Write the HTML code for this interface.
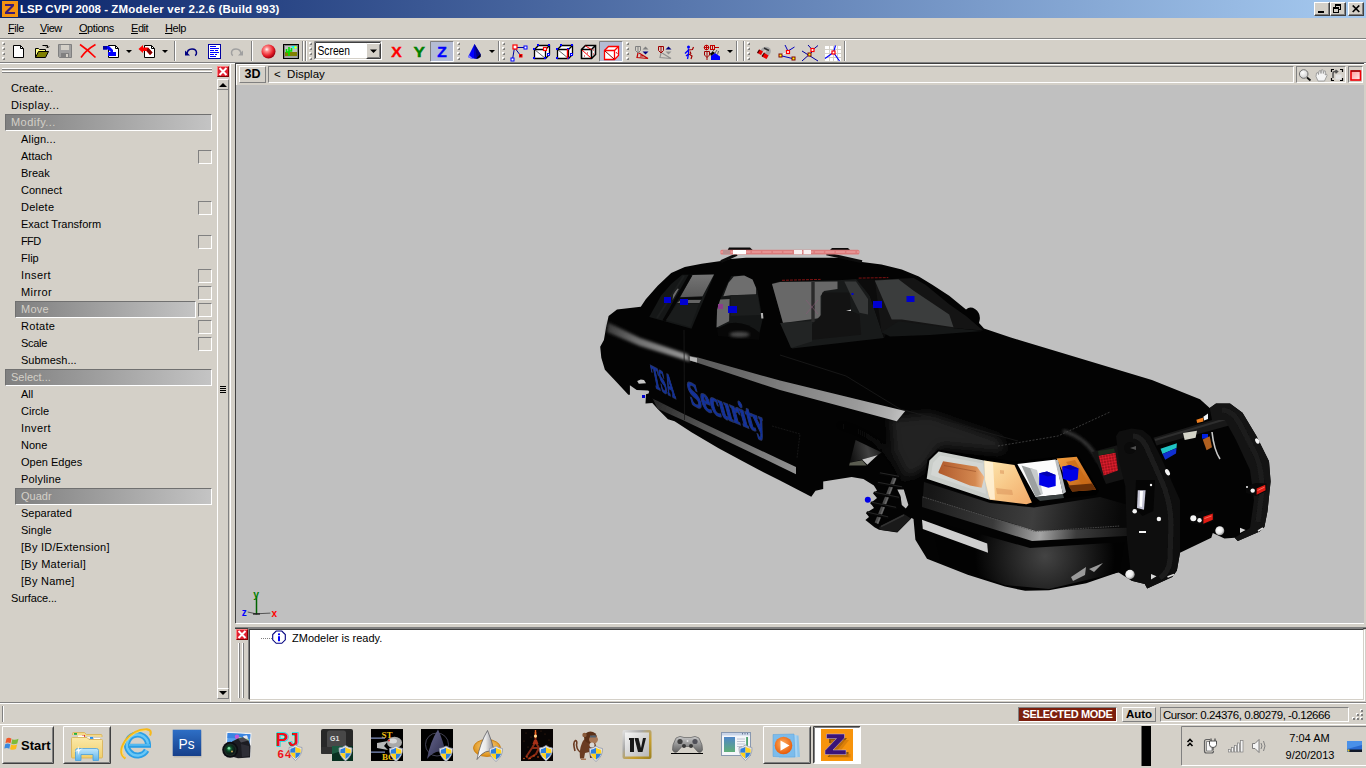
<!DOCTYPE html>
<html>
<head>
<meta charset="utf-8">
<title>LSP CVPI 2008 - ZModeler</title>
<style>
*{box-sizing:border-box;margin:0;padding:0}
html,body{width:1366px;height:768px;overflow:hidden;background:#d4d0c8;font-family:"Liberation Sans",sans-serif;font-size:11px;color:#000}
.abs{position:absolute}
#title{left:0;top:0;width:1366px;height:18px;background:linear-gradient(90deg,#0a246a 0%,#a6caf0 100%)}
#title .t{left:20px;top:2px;color:#fff;font-weight:bold;font-size:11.5px;line-height:15px;white-space:pre}
.wbtn{top:2px;width:16px;height:14px;background:#d4d0c8;border:1px solid;border-color:#fff #404040 #404040 #fff;box-shadow:inset -1px -1px 0 #808080}
#menu{left:0;top:18px;width:1366px;height:20px}
#menu span{position:absolute;top:3px;line-height:14px;letter-spacing:-0.45px}
#menu u{text-decoration:underline}
.hline{left:0;width:1366px;height:2px;border-top:1px solid #808080;border-bottom:1px solid #fff}
.tbsep{width:2px;border-left:1px solid #808080;border-right:1px solid #fff}
.grip{width:3px;background:repeating-linear-gradient(180deg,#fff 0,#fff 1px,#808080 1px,#808080 2px,#d4d0c8 2px,#d4d0c8 4px)}
#left .it{position:absolute;line-height:14px;white-space:nowrap}
.bar{position:absolute;height:17px;background:linear-gradient(90deg,#808080,#c4c4c4);border:1px solid;border-color:#707070 #fff #fff #707070;color:#d4d0c8;line-height:14px}
.cb{position:absolute;left:198px;width:14px;height:14px;border:1px solid;border-color:#808080 #fff #fff #808080;background:#d4d0c8}
.redx{width:12px;height:11px;background:#e02030;border:1px solid;border-color:#ff8080 #800000 #800000 #ff8080}
#vp{left:236px;top:85px;width:1128px;height:538px;background:#c0c0c0}
#task .ic{position:absolute;top:729px;width:32px;height:32px}
</style>
</head>
<body>
<!-- TITLE BAR -->
<div id="title" class="abs">
  <svg class="abs" style="left:2px;top:1px" width="16" height="16" viewBox="0 0 16 16"><rect width="16" height="16" fill="#f39410"/><path d="M3 3H12V5L6 11H13V13H3V11L9 5H3Z" fill="#3a1d78"/></svg>
  <div class="abs t">LSP CVPI 2008 - <span id="t2" style="letter-spacing:0.2px">ZModeler ver 2.2.6 (Build 993)</span></div>
  <div class="abs wbtn" style="left:1314px"><div class="abs" style="left:3px;top:8px;width:6px;height:2px;background:#000"></div></div>
  <div class="abs wbtn" style="left:1330px"><svg class="abs" style="left:0;top:-1px" width="14" height="12" shape-rendering="crispEdges"><path d="M4 2H10V4H4ZM4 4H5V5H4ZM9 4H10V8H8V7H9Z" fill="#000"/><path d="M2 5H8V7H2ZM2 7H3V11H2ZM7 7H8V11H7ZM2 10H8V11H2Z" fill="#000"/></svg></div>
  <div class="abs wbtn" style="left:1348px"><svg class="abs" style="left:3px;top:2px" width="9" height="8"><path d="M0.7 0.5L7.3 7M7.3 0.5L0.7 7" stroke="#000" stroke-width="1.7"/></svg></div>
</div>
<!-- MENU -->
<div id="menu" class="abs">
  <span style="left:8px"><u>F</u>ile</span>
  <span style="left:40px"><u>V</u>iew</span>
  <span style="left:79px"><u>O</u>ptions</span>
  <span style="left:131px"><u>E</u>dit</span>
  <span style="left:165px"><u>H</u>elp</span>
</div>
<div class="abs hline" style="top:38px"></div>
<!-- TOOLBAR -->
<div id="tb" class="abs" style="left:0;top:40px;width:1366px;height:22px">
<!--TB-START--><svg class="abs" style="left:0;top:0" width="1366" height="22" viewBox="0 40 1366 22">
<defs>
<g id="grip"><rect x="0" y="42" width="2" height="2" fill="#fff"/><rect x="1" y="43" width="2" height="2" fill="#808080"/><rect x="1" y="43" width="1" height="1" fill="#d4d0c8"/>
<rect x="0" y="47" width="2" height="2" fill="#fff"/><rect x="1" y="48" width="2" height="2" fill="#808080"/><rect x="1" y="48" width="1" height="1" fill="#d4d0c8"/>
<rect x="0" y="52" width="2" height="2" fill="#fff"/><rect x="1" y="53" width="2" height="2" fill="#808080"/><rect x="1" y="53" width="1" height="1" fill="#d4d0c8"/>
<rect x="0" y="57" width="2" height="2" fill="#fff"/><rect x="1" y="58" width="2" height="2" fill="#808080"/><rect x="1" y="58" width="1" height="1" fill="#d4d0c8"/></g>
<g id="sep"><rect x="0" y="41" width="1" height="20" fill="#808080"/><rect x="1" y="41" width="1" height="20" fill="#fff"/></g>
<path id="dd" d="M0 0H6L3 3Z" fill="#000"/>
<radialGradient id="ball" cx="0.38" cy="0.35" r="0.65"><stop offset="0" stop-color="#fff"/><stop offset="0.25" stop-color="#ff8a8a"/><stop offset="0.7" stop-color="#e8202a"/><stop offset="1" stop-color="#a00010"/></radialGradient>
</defs>
<use href="#grip" x="2"/>
<!-- new -->
<path d="M13.5 45.5H20.5L23.5 48.5V57.5H13.5Z" fill="#fff" stroke="#000"/><path d="M20.5 45.5V48.5H23.5" fill="none" stroke="#000"/>
<!-- open -->
<path d="M35.5 57.5V48.5H38.5L39.5 49.5H45.5V51.5" fill="#ffff80" stroke="#000"/><path d="M35.5 57.5L38.5 51.5H48.5L45.5 57.5Z" fill="#808000" stroke="#000"/><path d="M42.5 45.5H47.5V47.5M46 46.5L47.5 48L49 46.5" fill="none" stroke="#000"/>
<!-- save grey -->
<path d="M58.5 44.5H71.5V57.5H59.5L58.5 56.5Z" fill="#a0a0a0" stroke="#808080"/><rect x="61" y="45" width="8" height="5" fill="#d4d0c8"/><rect x="61" y="53" width="8" height="4" fill="#808080"/><rect x="66" y="54" width="2" height="3" fill="#d4d0c8"/>
<!-- red X -->
<path d="M80 44.5Q88 50 95.5 57.5M95.5 44.5Q86 50 81 57.5" fill="none" stroke="#f00" stroke-width="1.6"/>
<!-- import -->
<path d="M108.5 45.5H115.5L118.5 48.5V57.5H108.5Z" fill="#fff" stroke="#000"/><path d="M115.5 45.5V48.5H118.5" fill="none" stroke="#000"/>
<path d="M103 46H109L113 50V52H116V56H108V52H111L108 49.5H103Z" fill="#00f"/><path d="M103 46H107V49.5H103Z" fill="#0000a0"/>
<use href="#dd" x="126" y="50"/>
<!-- export -->
<path d="M144.5 45.5H151.5L154.5 48.5V57.5H144.5Z" fill="#fff" stroke="#000"/><path d="M151.5 45.5V48.5H154.5" fill="none" stroke="#000"/>
<path d="M138.5 49L143 45V47.5H148L152.5 52.5L150 55L146.5 51H143V53Z" fill="#f00"/><path d="M148 47.5L152.5 52.5L150 55L146.5 51Z" fill="#800000"/>
<use href="#dd" x="162" y="50"/>
<use href="#sep" x="174"/>
<!-- undo -->
<path d="M187 54.5Q187 49 192 49Q196.5 49 196.5 53Q196.5 55 195 55.5" fill="none" stroke="#000080" stroke-width="1.5"/><path d="M185 50.5V55.5H190Z" fill="#000080"/>
<!-- list doc -->
<rect x="208.5" y="44.5" width="12" height="14" fill="#fff" stroke="#0000a0"/><path d="M210 46.5H216M210 48.5H219M210 50.5H214M210 52.5H219M210 54.5H214M215 50.5H218M215 54.5H217M210 56.5H216" stroke="#00f" stroke-width="1" shape-rendering="crispEdges"/>
<!-- redo grey -->
<path d="M241 54.5Q241 49 236 49Q231.5 49 231.5 53Q231.5 55 233 55.5" fill="none" stroke="#a0a0a0" stroke-width="1.5"/><path d="M243 50.5V55.5H238Z" fill="#a0a0a0"/>
<use href="#sep" x="251"/>
<!-- red ball -->
<circle cx="268.5" cy="51.5" r="7" fill="url(#ball)"/>
<!-- cactus picture -->
<rect x="283.5" y="44.5" width="15" height="14" fill="#808080" stroke="#000"/><rect x="285" y="46" width="12" height="6" fill="#c0c0c0"/><rect x="285" y="52" width="12" height="4" fill="#808000"/><rect x="285" y="56" width="12" height="2" fill="#a0a0a0"/>
<path d="M291 46L294 49H297V46Z" fill="#00ffff"/><circle cx="295.5" cy="47.5" r="1.300" fill="#ffff00"/>
<path d="M289 47V56M286.5 49V52H289M291.5 48V51H289" fill="none" stroke="#00e000" stroke-width="1.600"/>
<use href="#sep" x="302"/><use href="#sep" x="305"/>
<use href="#grip" x="309"/>
<!-- combo -->
<rect x="314" y="41" width="68" height="19" fill="#fff"/><path d="M314.5 59.5V41.5H381.5" fill="none" stroke="#808080"/><path d="M315.5 58.5V42.5H380.5" fill="none" stroke="#404040"/><path d="M314.5 59.5H381.5V41.5" fill="none" stroke="#fff"/><path d="M315.5 58.5H380.5V42.5" fill="none" stroke="#d4d0c8"/>
<rect x="366" y="43" width="15" height="16" fill="#d4d0c8"/><path d="M366.5 58.5V43.5H380.5" fill="none" stroke="#fff"/><path d="M366.5 58.5H380.5V43.5" fill="none" stroke="#404040"/><path d="M367.5 57.5H379.5V44.5" fill="none" stroke="#808080"/>
<path d="M370 49.5H377L373.5 53Z" fill="#000"/>
<text x="317.5" y="55" font-family="Liberation Sans, sans-serif" font-size="12" fill="#000" textLength="32.5" lengthAdjust="spacingAndGlyphs">Screen</text>
<!-- X Y Z -->
<text x="391.3" y="56.7" font-family="Liberation Sans, sans-serif" font-size="15" font-weight="bold" fill="#f00" stroke="#f00" stroke-width="0.4" textLength="10.5" lengthAdjust="spacingAndGlyphs">X</text>
<text x="413.5" y="56.7" font-family="Liberation Sans, sans-serif" font-size="15" font-weight="bold" fill="#008000" stroke="#008000" stroke-width="0.4" textLength="11.5" lengthAdjust="spacingAndGlyphs">Y</text>
<rect x="430" y="41" width="24" height="21" fill="#b4bcd4"/><path d="M430.5 61.5V41.5H453.5" fill="none" stroke="#808080"/><path d="M430.5 61.5H453.5V41.5" fill="none" stroke="#fff"/>
<text x="437.3" y="56.7" font-family="Liberation Sans, sans-serif" font-size="15" font-weight="bold" fill="#00f" stroke="#00f" stroke-width="0.4" textLength="9.5" lengthAdjust="spacingAndGlyphs">Z</text>
<use href="#grip" x="457"/>
<!-- cone -->
<path d="M474.5 44L468 57L471 58.5H478L480.5 56.5V54Z" fill="#00f"/><path d="M474.5 44V58.5H478L480.5 56.5V54Z" fill="#000080"/><path d="M474.5 44L474.5 58.5L477 58.5Z" fill="#0000c0"/><path d="M480.5 54V57L478 58.5H476Z" fill="#000"/><path d="M468 57L471 58.5H473L469 55Z" fill="#8080ff"/>
<use href="#dd" x="489" y="50"/>
<use href="#sep" x="498"/>
<use href="#grip" x="502"/>
<!-- vertex icon -->
<path d="M514.5 47.5H525.5M514.5 47.5L512.5 59.5M514.5 47.5L520.5 55.5" fill="none" stroke="#0000a0" stroke-width="1"/>
<rect x="513" y="45" width="4" height="4" fill="#fff" stroke="#f00" stroke-width="1.200"/><rect x="524" y="46" width="3" height="3" fill="#fff" stroke="#00f"/><rect x="511" y="58" width="3" height="3" fill="#fff" stroke="#00f"/><rect x="519" y="54" width="3.5" height="3.5" fill="#f00"/><rect x="520" y="55" width="1.5" height="1.5" fill="#600"/>
<!-- edge cube -->
<g id="cube"><path d="M534.5 49.5L538.5 45.5H549.5V54.5L545.5 58.5H534.5Z" fill="#fff" stroke="#000" stroke-width="1.300"/><path d="M534.5 49.5H545.5V58.5M545.5 49.5L549.5 45.5" fill="none" stroke="#000" stroke-width="1.300"/><path d="M534.5 49.5L545.5 58.5" stroke="#404040" stroke-width="0.800"/></g>
<g fill="#00f"><rect x="537" y="44" width="2" height="2"/><rect x="548" y="44" width="2" height="2"/><rect x="533" y="48" width="2" height="2"/><rect x="533" y="57" width="2" height="2"/><rect x="544" y="57" width="2" height="2"/></g>
<rect x="543.5" y="47.5" width="3" height="3" fill="#fff" stroke="#f00" stroke-width="1.200"/><rect x="547.5" y="53.5" width="2" height="2" fill="#fff" stroke="#00f"/>
<!-- face cube -->
<use href="#cube" x="23"/>
<g fill="#00f"><rect x="560" y="44" width="2" height="2"/><rect x="571" y="44" width="2" height="2"/><rect x="556" y="48" width="2" height="2"/><rect x="556" y="57" width="2" height="2"/><rect x="567" y="48" width="2" height="2"/><rect x="567" y="57" width="2" height="2"/></g>
<path d="M567.5 49V58.5" stroke="#f00" stroke-width="1.400"/><rect x="570.5" y="53.5" width="2" height="2" fill="#fff" stroke="#00f"/>
<!-- object cube -->
<path d="M581.5 49.5L585.5 45.5H595.5V54.5L591.5 58.5H581.5Z" fill="#fff" stroke="#000" stroke-width="1.600"/><path d="M581.5 49.5H591.5V58.5M591.5 49.5L595.5 45.5" fill="none" stroke="#000" stroke-width="1.600"/>
<path d="M582 50L591 58M585.5 46L591.5 49.5" stroke="#f00" stroke-width="1"/><path d="M587 53H588M584 56H585M593 50H594M593 54H594" stroke="#c00" stroke-width="1"/>
<!-- selected red cube -->
<rect x="599" y="41" width="24" height="21" fill="#b4bcd4"/><path d="M599.5 61.5V41.5H622.5" fill="none" stroke="#808080"/><path d="M599.5 61.5H622.5V41.5" fill="none" stroke="#fff"/>
<path d="M604.5 50.5L608.5 46.5H618.5V55.5L614.5 59.5H604.5Z" fill="#fff" stroke="#f00" stroke-width="1.300"/><path d="M604.5 50.5H614.5V59.5M614.5 50.5L618.5 46.5" fill="none" stroke="#f00" stroke-width="1.300"/><path d="M605 51L614 59" stroke="#800" stroke-width="1"/><path d="M616 52L617.5 54" stroke="#a00" stroke-width="0.800"/>
<use href="#grip" x="626"/>
<!-- sel mode icons -->
<path d="M635.5 46.5H640.5V50.5L638 53L635.5 50.5Z" fill="#d4d0c8" stroke="#808080"/><path d="M638 47V52" stroke="#808080"/>
<path d="M638 53L637 57.5L648 58.5L639 53M640 56H644" fill="none" stroke="#c00000" stroke-width="1.200"/>
<path d="M642.5 49.5L645.5 46.5L648.5 49.5Z" fill="#808080"/><path d="M642.5 51.5L645.5 54.5L648.5 51.5Z" fill="#000080"/>
<path d="M658.5 46.5H663.5V50.5L661 53L658.5 50.5Z" fill="#d4d0c8" stroke="#a00000"/><path d="M661 47V52" stroke="#a00000"/>
<path d="M661 53L660 57.5L671 58.5L662 53" fill="none" stroke="#909090" stroke-width="1.200"/>
<path d="M665.5 49.5L668.5 46.5L671.5 49.5Z" fill="#000080"/><path d="M665.5 51.5L668.5 54.5L671.5 51.5Z" fill="#909090"/>
<!-- person -->
<circle cx="688.5" cy="47" r="1.5" fill="#00f"/><path d="M688.5 48.5V54L687.5 59M688.5 50L685 53.5M688.5 54L686 56" fill="none" stroke="#00f" stroke-width="1.300"/>
<path d="M689 50L692.5 49.5L693.5 47M689 54L692 56L691 59M690 51.5L691 54" fill="none" stroke="#a00000" stroke-width="1.200"/>
<!-- icon 4 -->
<circle cx="706.5" cy="47.5" r="2.300" fill="none" stroke="#c00000"/><path d="M704 47.5H709M706.5 45V50" stroke="#c00000"/>
<rect x="710.5" y="45.5" width="4" height="4" fill="none" stroke="#c00000"/><path d="M714 47.5H719M712.5 45V50" stroke="#c00000"/>
<path d="M704.5 51.5H709.5V55L707 57.5L704.5 55Z M707 52V60" fill="none" stroke="#a00000"/>
<path d="M711 56L715 53L720 56.5V60H711Z" fill="#00f"/><path d="M711 56L715 53L713 51.5L710 53.5Z" fill="#000"/><path d="M712 52L714 50M715 53L717 50M717.5 54.5L718.5 51" stroke="#404040" stroke-width="0.800"/>
<use href="#dd" x="727" y="50"/>
<use href="#sep" x="736"/><use href="#sep" x="743"/>
<use href="#grip" x="747"/>
<!-- magnet -->
<path d="M760 52Q762 45.5 768 47Q772 48.5 770.5 53L766.5 59L762 56.5L766 51.5Q766.5 50 765 50Q763.5 50 763 51.5L761 55L757.5 53Z" fill="#a8a8a8"/>
<path d="M757.5 53L759.5 49.5L763 51.5L761 55Z" fill="#e00"/><path d="M762 56.5L764.5 53L768.5 55.5L766.5 59Z" fill="#e00"/><path d="M757 52.5L759 49.5L760 50L758 53.5Z M761.5 56L764 52.5L765 53L762.5 57Z" fill="#400"/>
<path d="M764 48L769 50.5" stroke="#303030" stroke-width="1.5"/>
<!-- snap1 -->
<path d="M785 45L788 51L794.5 47M780 55.5L792.5 58.5" fill="none" stroke="#0000c0" stroke-width="1"/><path d="M780 55.5L788 52" stroke="#fff" stroke-width="1"/>
<rect x="786.5" y="50.5" width="3" height="3" fill="#fff" stroke="#f00" stroke-width="1.200"/><rect x="779" y="54" width="3" height="3" fill="#ff0" stroke="#800000"/><rect x="792" y="57" width="3" height="3" fill="#ff0" stroke="#800000"/>
<!-- snap2 -->
<path d="M802 51L818 61M802 61L812 52M808 45L812.5 50L818 45.5" fill="none" stroke="#0000a0" stroke-width="1"/>
<rect x="811" y="48.5" width="3" height="3" fill="#fff" stroke="#f00" stroke-width="1.200"/><rect x="808" y="53" width="3" height="3" fill="#ff0" stroke="#800000"/>
<!-- snap3 grid -->
<rect x="825" y="46" width="16" height="15" fill="#fff"/><path d="M829.5 46V61M833.5 46V61M837.5 46V61M825 49.5H841M825 53.5H841M825 57.5H841" stroke="#d4d0c8" stroke-width="1"/>
<path d="M835.5 45.5L833.5 52.5L825 58.5M833.5 52.5L839.5 61" fill="none" stroke="#00f" stroke-width="1.200"/><rect x="832" y="51" width="3" height="3" fill="#fff" stroke="#f00" stroke-width="1.200"/>
<use href="#sep" x="844"/>
</svg>
<!--TB-END-->
</div>
<div class="abs hline" style="top:62px"></div>

<!-- LEFT PANEL -->
<div id="left" class="abs" style="left:0;top:64px;width:230px;height:640px">
<div class="abs" style="left:2px;top:4px;width:210px;height:2px;border-top:1px solid #fff;border-bottom:1px solid #808080"></div>
<div class="abs" style="left:2px;top:7px;width:210px;height:2px;border-top:1px solid #fff;border-bottom:1px solid #808080"></div>
<div class="abs redx" style="left:217px;top:2px"><svg class="abs" style="left:0;top:0" width="10" height="9"><path d="M1.5 1L8.5 8M8.5 1L1.5 8" stroke="#fff" stroke-width="2"/></svg></div>
<div class="abs" style="left:217px;top:15px;width:12px;height:620px;border-left:1px solid #fff;border-right:1px solid #808080"></div><div class="abs" style="left:230px;top:0;width:1px;height:638px;background:#fff"></div>
<div class="abs" style="left:217px;top:15px;width:12px;height:11px;border:1px solid;border-color:#fff #808080 #808080 #fff"><svg class="abs" style="left:1px;top:2px" width="8" height="5"><path d="M0 5L4 1L8 5Z" fill="#000"/></svg></div>
<div class="abs" style="left:217px;top:624px;width:12px;height:11px;border:1px solid;border-color:#fff #808080 #808080 #fff"><svg class="abs" style="left:1px;top:2px" width="8" height="5"><path d="M0 0L4 4L8 0Z" fill="#000"/></svg></div>
<div class="abs" style="left:220px;top:322px;width:6px;height:7px;background:repeating-linear-gradient(180deg,#000 0,#000 1px,transparent 1px,transparent 2px)"></div>
<div class="it" style="left:11px;top:17px">Create...</div>
<div class="it" style="left:11px;top:34px;letter-spacing:0.4px">Display...</div>
<div class="bar" style="left:5px;top:50px;width:207px;padding-left:5px;letter-spacing:0.45px">Modify...</div>
<div class="it" style="left:21px;top:68px;letter-spacing:0.18px">Align...</div>
<div class="it" style="left:21px;top:85px">Attach</div>
<div class="cb" style="top:86px"></div>
<div class="it" style="left:21px;top:102px">Break</div>
<div class="it" style="left:21px;top:119px">Connect</div>
<div class="it" style="left:21px;top:136px;letter-spacing:0.25px">Delete</div>
<div class="cb" style="top:137px"></div>
<div class="it" style="left:21px;top:153px">Exact Transform</div>
<div class="it" style="left:21px;top:170px;letter-spacing:-0.65px">FFD</div>
<div class="cb" style="top:171px"></div>
<div class="it" style="left:21px;top:187px">Flip</div>
<div class="it" style="left:21px;top:204px;letter-spacing:0.42px">Insert</div>
<div class="cb" style="top:205px"></div>
<div class="it" style="left:21px;top:221px;letter-spacing:0.4px">Mirror</div>
<div class="cb" style="top:222px"></div>
<div class="bar" style="left:15px;top:237px;width:181px;padding-left:5px;letter-spacing:0.27px">Move</div>
<div class="cb" style="top:239px"></div>
<div class="it" style="left:21px;top:255px;letter-spacing:0.3px">Rotate</div>
<div class="cb" style="top:256px"></div>
<div class="it" style="left:21px;top:272px;letter-spacing:-0.3px">Scale</div>
<div class="cb" style="top:273px"></div>
<div class="it" style="left:21px;top:289px">Submesh...</div>
<div class="bar" style="left:5px;top:305px;width:207px;padding-left:5px">Select...</div>
<div class="it" style="left:21px;top:323px">All</div>
<div class="it" style="left:21px;top:340px">Circle</div>
<div class="it" style="left:21px;top:357px;letter-spacing:0.42px">Invert</div>
<div class="it" style="left:21px;top:374px">None</div>
<div class="it" style="left:21px;top:391px">Open Edges</div>
<div class="it" style="left:21px;top:408px;letter-spacing:0.2px">Polyline</div>
<div class="bar" style="left:15px;top:424px;width:197px;padding-left:5px">Quadr</div>
<div class="it" style="left:21px;top:442px">Separated</div>
<div class="it" style="left:21px;top:459px">Single</div>
<div class="it" style="left:21px;top:476px;letter-spacing:0.26px">[By ID/Extension]</div>
<div class="it" style="left:21px;top:493px;letter-spacing:0.3px">[By Material]</div>
<div class="it" style="left:21px;top:510px;letter-spacing:0.25px">[By Name]</div>
<div class="it" style="left:11px;top:527px;letter-spacing:-0.13px">Surface...</div>
</div>

<!-- VIEWPORT HEADER -->
<div id="vph" class="abs" style="left:235px;top:64px;width:1131px;height:21px">
<div class="abs" style="left:0;top:-1px;width:1129px;height:1px;background:#404040"></div>
<div class="abs" style="left:0;top:-1px;width:1px;height:560px;background:#404040"></div>
<div class="abs" style="left:1px;top:0;width:1128px;height:1px;background:#fff"></div>
<div class="abs" style="left:1px;top:0;width:1px;height:21px;background:#fff"></div>
<div class="abs" style="left:4px;top:2px;width:27px;height:17px;border:1px solid;border-color:#fff #808080 #808080 #fff;font-weight:bold;font-size:12.5px;line-height:15px;text-align:center">3D</div>
<div class="abs" style="left:33px;top:2px;width:1026px;height:17px;border:1px solid;border-color:#808080 #fff #fff #808080"></div>
<div class="abs" style="left:39px;top:3px;line-height:14px;font-size:11.5px;white-space:pre">&lt;  Display</div>
<div class="abs" style="left:1061px;top:2px;width:50px;height:17px;border:1px solid;border-color:#808080 #fff #fff #808080"></div>
<div class="abs" style="left:1113px;top:2px;width:15px;height:17px;border:1px solid;border-color:#808080 #fff #fff #808080"></div>
<svg class="abs" style="left:1061px;top:0" width="70" height="21" viewBox="1296 64 70 21">
<defs><radialGradient id="lens" cx="0.4" cy="0.35" r="0.7"><stop offset="0" stop-color="#fff"/><stop offset="1" stop-color="#c8c8c8"/></radialGradient>
<linearGradient id="rsq" x1="0" y1="0" x2="1" y2="1"><stop offset="0" stop-color="#ff9a9a"/><stop offset="1" stop-color="#fff0f0"/></linearGradient></defs>
<circle cx="1303.7" cy="74" r="4.3" fill="url(#lens)" stroke="#707070" stroke-width="1"/><path d="M1307 77.5L1310.5 80.5" stroke="#101010" stroke-width="1.8"/>
<path d="M1318 81L1316 76.5L1316.5 73L1318 72.5L1318.5 74.5L1319 71L1320.5 70.5L1321 73.5L1321.5 69.8L1323 69.8L1323.3 73.5L1324.2 70.8L1325.5 71.2L1325.2 75L1326.5 74L1327 75.5L1324.5 81Z" fill="#f4f4f4" stroke="#909090" stroke-width="0.8"/>
<path d="M1331.5 72V69.5H1334M1340 69.5H1342.5V72M1342.5 78V80.5H1340M1334 80.5H1331.5V78" fill="none" stroke="#000" stroke-width="1.2"/>
<rect x="1335.5" y="74.5" width="6" height="5" fill="#e4e4e4"/><path d="M1333 78V73.5Q1333 71.5 1335 71.5H1337M1335.5 70L1337.5 71.5L1335.5 73.2" fill="none" stroke="#505050" stroke-width="1.5"/>
<rect x="1351" y="71" width="9.5" height="9" fill="url(#rsq)" stroke="#f00008" stroke-width="1.600"/><path d="M1351 71H1360" stroke="#400" stroke-width="0.8"/>
</svg>
</div>

<!-- VIEWPORT -->
<div id="vp" class="abs">
<!--CAR-START--><svg class="abs" style="left:0;top:0" width="1128" height="538" viewBox="236 85 1128 538">
<defs>
<linearGradient id="stripeU" gradientUnits="userSpaceOnUse" x1="688" y1="357" x2="905" y2="415"><stop offset="0" stop-color="#565656"/><stop offset="0.25" stop-color="#6a6a6a"/><stop offset="0.5" stop-color="#848484"/><stop offset="0.78" stop-color="#9a9a9a"/><stop offset="0.93" stop-color="#b0b0b0"/><stop offset="1" stop-color="#c4c4c4"/></linearGradient>
<linearGradient id="stripeL" gradientUnits="userSpaceOnUse" x1="652" y1="400" x2="796" y2="470"><stop offset="0" stop-color="#262626"/><stop offset="0.3" stop-color="#4e4e4e"/><stop offset="0.7" stop-color="#767676"/><stop offset="1" stop-color="#949494"/></linearGradient>
<linearGradient id="glassA" x1="0" y1="0" x2="0" y2="1"><stop offset="0" stop-color="#747474"/><stop offset="1" stop-color="#5a5a5a"/></linearGradient>
<linearGradient id="bump1" gradientUnits="userSpaceOnUse" x1="922" y1="500" x2="1130" y2="530"><stop offset="0" stop-color="#1a1a1a"/><stop offset="0.35" stop-color="#3a3a3a"/><stop offset="0.58" stop-color="#a4a4a4"/><stop offset="0.75" stop-color="#3c3c3c"/><stop offset="1" stop-color="#141414"/></linearGradient>
<radialGradient id="bump2" gradientUnits="userSpaceOnUse" cx="1045" cy="556" r="70"><stop offset="0" stop-color="#444"/><stop offset="1" stop-color="#020202"/></radialGradient>
<radialGradient id="fend" gradientUnits="userSpaceOnUse" cx="930" cy="440" r="70"><stop offset="0" stop-color="#262626"/><stop offset="1" stop-color="#020202"/></radialGradient>
<linearGradient id="amber" x1="0" y1="0" x2="1" y2="0"><stop offset="0" stop-color="#b05a2c"/><stop offset="0.8" stop-color="#d48850"/><stop offset="1" stop-color="#f0b888"/></linearGradient>
<linearGradient id="cream" x1="0" y1="0" x2="1" y2="1"><stop offset="0" stop-color="#fde8b0"/><stop offset="0.5" stop-color="#f8c888"/><stop offset="1" stop-color="#f0a868"/></linearGradient>
<linearGradient id="orng" x1="0" y1="0" x2="1" y2="1"><stop offset="0" stop-color="#f4a040"/><stop offset="1" stop-color="#b85810"/></linearGradient>
<linearGradient id="tube" x1="0" y1="0" x2="1" y2="0"><stop offset="0" stop-color="#0a0a0a"/><stop offset="0.5" stop-color="#2a2a2a"/><stop offset="1" stop-color="#080808"/></linearGradient>
<pattern id="reddots" width="2.8" height="2.8" patternUnits="userSpaceOnUse" patternTransform="rotate(-10)"><rect width="2.8" height="2.8" fill="#8a0c14"/><circle cx="1.4" cy="1.4" r="1.15" fill="#e82030"/></pattern>
<filter id="b1" x="-20%" y="-20%" width="140%" height="140%"><feGaussianBlur stdDeviation="1.6"/></filter>
<filter id="b05" x="-20%" y="-20%" width="140%" height="140%"><feGaussianBlur stdDeviation="0.6"/></filter>
<filter id="b3" x="-30%" y="-30%" width="160%" height="160%"><feGaussianBlur stdDeviation="5"/></filter>
<linearGradient id="well" gradientUnits="userSpaceOnUse" x1="850" y1="455" x2="880" y2="448"><stop offset="0" stop-color="#101010"/><stop offset="0.6" stop-color="#404040"/><stop offset="1" stop-color="#262626"/></linearGradient>
<linearGradient id="stripeR" gradientUnits="userSpaceOnUse" x1="607" y1="327" x2="690" y2="358"><stop offset="0" stop-color="#3a3a3a"/><stop offset="0.35" stop-color="#6e6e6e"/><stop offset="1" stop-color="#9a9a9a"/></linearGradient>
<filter id="b02" x="-10%" y="-10%" width="120%" height="120%"><feGaussianBlur stdDeviation="0.35"/></filter>
<linearGradient id="bumpU" gradientUnits="userSpaceOnUse" x1="930" y1="490" x2="1120" y2="520"><stop offset="0" stop-color="#161616"/><stop offset="0.3" stop-color="#2c2c2c"/><stop offset="0.55" stop-color="#3e3e3e"/><stop offset="0.8" stop-color="#1a1a1a"/><stop offset="1" stop-color="#080808"/></linearGradient>
<radialGradient id="sph" cx="0.4" cy="0.4" r="0.7"><stop offset="0" stop-color="#fff"/><stop offset="0.55" stop-color="#e8e8e8"/><stop offset="1" stop-color="#6a6a6a"/></radialGradient>
</defs>
<!-- silhouette -->
<path fill="#030303" d="M600.2 346.8L601.3 357.7L604.9 369.7L616 381.5L628.3 394.7L629.9 394.7L629.9 385.3L636.7 390L648.1 390.5L649.2 391.6L648.6 393.6L646 394.2L645.5 403.5L652.3 403L657.5 408.8L668 419.2L674.6 421.2L691.5 432.2L718.6 448.3L742.3 461L759.2 470L780 480.6L811.3 496.7L815.5 490.8L823.2 489L823.2 481.5L851.7 477.1L863.4 479L873.9 485.6L877 490.5L873.2 493.4L877 498L870.6 503.2L874 508L866 513L869 517L865.4 520L874.5 527.2L879 529.8L897.3 532.4L911.6 518.1L913.5 519L915.4 539.8L927 558.7L967.7 574.8L1005 586.6L1025.2 590.8L1049 590.3L1086.2 583.2L1118.3 572.2L1131.6 580.8L1144.8 584L1147.2 588.6L1172.2 576.9L1176.9 570.6L1180 552.7L1211.3 537.8L1212.8 533L1224.5 538.6L1234.7 537.8L1237.8 541L1259.7 531.6L1264.4 526.9L1267.5 511.3L1270.6 481.6L1269 461.3L1256.6 436.3L1242.5 412.8L1230 403.4L1216 403.4L1209.7 408L1200 399.2L1151.9 380L1019 340L1010 337.3L984 328.5L979 323Q982 314 975 309Q970 306 966 309.4L949.2 295.8L932.3 284.8L918.8 276.4L901.8 269.6L881.5 264.5L862 262L850 258L831.7 257.8L746 257.8L730 259L721 261L701.7 263.7L684.8 267L671.2 273L657.7 285.7L645.8 299.2L640.8 306.8L617 309.4L608.6 316L606 328L603.9 340Z"/>
<!-- wheel well gaps -->
<path fill="#c8c8c8" d="M637.2 381.1L640.8 379.6L644 380.1L646 383.2L638.8 383.8Z"/>
<path fill="#c0c0c0" d="M897.3 489.5L903.8 489.5L908.4 505.1L905.8 508.4L901.8 505.1L900.5 496Z"/>
<path fill="url(#well)" d="M855.6 440L881.7 452.4L877.8 455L862.1 459.5L849.8 462.8Z"/><path fill="#c4c4c4" d="M862.1 459.5L877.8 455L867.3 464.7Z"/><path fill="#5a5c50" d="M849.8 462.8L862.1 460.2L866.7 465.4L849.1 465.4Z"/>
<!-- fender/hood subtle shading -->
<g filter="url(#b3)"><path fill="#222" d="M890 418L930 414L1000 438L1005 452L940 446L925 468L908 478L893 450Z"/><path d="M835 424Q858 428 876 442Q895 457 905 482" fill="none" stroke="#121212" stroke-width="3.5"/></g>
<path d="M780 355L846 376L900 409L948 422L1018 441" fill="none" stroke="#1c1c1c" stroke-width="0.8"/>
<path d="M998 446L1058 436L1110 412" fill="none" stroke="#505050" stroke-width="0.7" stroke-dasharray="2 1.5"/>
<!-- WINDOW A -->
<path fill="#151717" d="M682.2 274.7L714.4 274.4L691.5 328.8L649.2 317L661 295.8L671.2 284Z"/>
<path fill="url(#glassA)" d="M692.6 274.9L714 274.6L702.5 296.3L680.1 297.3Z"/>
<path fill="#646464" d="M689 300L701 300L699.4 303L677 303L680 300.4Z"/>
<path fill="#6c6c6c" d="M673.3 293L677.5 288.4L678.8 289L672.5 300Z"/>
<path d="M690.5 275L664 321" stroke="#050505" stroke-width="3.5"/><path d="M684 276L657 318" stroke="#1c1e1e" stroke-width="2"/>
<path d="M679 298.7L702 297.8" stroke="#0a0a0a" stroke-width="1.8"/>
<path fill="#1a1c1c" d="M677 304L699 304L690.5 327L666 320Z"/>
<!-- WINDOW B -->
<path fill="#141616" d="M731.3 276L742.3 275.5L752.5 279.8L757.5 290.8L762.6 319.5L759 334.8L718.6 328L716 327.2L717 307.7L723.7 290.8Z"/>
<path fill="#6e6e6e" d="M728.5 282.7L733.8 276.5L744.2 275.4L752.5 279.6L756.1 287.9L756.1 294.2L730.6 295.2L723.3 296.3Z"/>
<path fill="#6a6a6a" d="M720.2 299.4L729.6 298.9L729.1 321.3L716.6 327.5L717.1 309.8Z"/>
<path fill="#1c1e1e" d="M730.6 295.2L757.7 294.7L760.8 315L730.6 316Z"/>
<path fill="#b0b0b0" d="M760.8 313L763 313L763.4 318.6L761.3 318.6Z"/>
<path fill="#070707" d="M717 329L729 323.3Q745 320 760 333L759 340L718 336Z"/>
<ellipse cx="739.5" cy="334.5" rx="10" ry="2.8" fill="#484848" filter="url(#b1)"/>
<!-- WINDOW C -->
<path fill="#181a1a" d="M772 283.5L780 281.5L838 280.3L858 279L870 296L878 320L884 338L792 348.5L783 323Z"/>
<path fill="#686868" d="M772 284L780 282L837.5 281.5L837.5 289L824 291L820.6 296L820.6 318L783 323Z"/>
<path fill="#222424" d="M780 323L812 321L812 341.5L791 348Z"/>
<path fill="#2a2a2a" d="M811.3 282H814.7V322H811.3Z"/>
<path fill="#131313" d="M822.3 292.5L849.4 292.5L851 311L859.5 314.5L861.2 334.8L812 339.8L812 324.6L821.5 314.5Z"/>
<path fill="#363838" d="M844.3 281.5L856 281.5L868 299L868 314.5L859.5 312.8L851 295.8Z"/>
<path d="M806 300L818 314M818 300L806 314" stroke="#8a5a78" stroke-width="0.8" opacity="0.7"/>
<path d="M846 311L851 309.5L851 311Z" fill="#d0d0d0"/>
<!-- A pillar -->
<path fill="#0c0c0c" d="M856 279L875 279.5L893 320L884 338L878 320L870 296Z"/>
<!-- WINDSHIELD -->
<path fill="#141414" d="M874.8 279.8L913.7 278L925.5 284.8L949.2 304.3L966 316L983 330.5L952.6 328L900 333L881.5 332.2Z"/>
<path fill="#3b3d3d" d="M874.8 280.6L898.5 279.3L913.7 290.8L949.2 314.5L953.5 327.2L901.8 319.5L891.7 319.5L885 304.3Z"/>
<path fill="#151717" d="M881.5 332.2L898.5 321.2L952.6 328L983 331L930 335L890 336.5Z"/>
<path d="M782 280.3L820.6 279.4M858.7 278.1L888.3 277.6" stroke="#8c1414" stroke-width="0.9" stroke-dasharray="3 1"/>
<!-- blue dots -->
<g fill="#0000d0"><rect x="664" y="297" width="7" height="6"/><rect x="680" y="299" width="8" height="6"/><rect x="728" y="306" width="9" height="7"/><rect x="873" y="301" width="9" height="7"/><rect x="906.5" y="296" width="8" height="6"/><rect x="642" y="395" width="3" height="3"/><rect x="851.5" y="293" width="2" height="2"/></g>
<circle cx="867.8" cy="499.7" r="3" fill="#0000e8"/>
<rect x="718" y="304" width="5" height="5" fill="#8a3c8a"/>
<!-- LIGHTBAR -->
<path fill="#0a0a0a" d="M727.7 250L729 247.5L750 247.5L752.7 250ZM830 250L832 248L848 248L850 250Z"/>
<path d="M736.9 254.5L721 261.7M826.5 253.8L862 261.7" stroke="#0c0c0c" stroke-width="3"/>
<rect x="720.4" y="249.8" width="139" height="4.6" rx="1.5" fill="#dc7c7c"/>
<path d="M720.4 252.1H859.4" stroke="#e89a9a" stroke-width="1.5" stroke-dasharray="9 1.5"/>
<rect x="733" y="250" width="13" height="4.2" fill="#fff"/><rect x="794" y="250" width="8" height="4.2" fill="#f8f0f0"/><rect x="803.5" y="250" width="7.5" height="4.2" fill="#f8f0f0"/><rect x="723" y="250" width="7" height="4.2" fill="#b89090"/>
<!-- UPPER STRIPE -->
<path fill="url(#stripeR)" filter="url(#b1)" d="M608 322.5L640 338L688 354.5L690 361.5L640 346L607 332Z"/>
<path fill="url(#stripeU)" filter="url(#b02)" d="M688 355.5L698 357.5L780 380.6L905.2 411L896.8 421.2L780 390L698 363L688 360Z"/>
<path fill="#b8b8b8" d="M690 356.5L697 358L697 362.5L690 360.5Z"/>
<!-- LOWER STRIPE -->
<path fill="url(#stripeL)" filter="url(#b05)" d="M652.6 398.4L684.8 414.5L780 459.5L796 467L796 474.3L780 466.4L684.8 421L657.7 408.7Z"/>
<!-- door lines -->
<path d="M684 330L684.5 420" stroke="#1a1a1a" stroke-width="0.8"/>
<path d="M772 426L800 434L797 458" fill="none" stroke="#1c1c1c" stroke-width="0.8" stroke-dasharray="2 1"/>
<!-- TEXT -->
<g font-family="Liberation Serif, serif" font-weight="bold">
<g fill="#3c4a80" stroke="#3c4a80" stroke-width="2.2" filter="url(#b05)" opacity="0.7">
<text font-size="33" transform="matrix(1 0.53 0.2 1 654.5 387)" textLength="21.5" lengthAdjust="spacingAndGlyphs">TSA</text>
<text font-size="36" transform="matrix(1 0.409 0.27 1 691.5 404.5)" textLength="75" lengthAdjust="spacingAndGlyphs">Security</text></g>
<g fill="#12309a" stroke="#12309a" stroke-width="0.3" filter="url(#b02)">
<text font-size="33" transform="matrix(1 0.53 0.2 1 654.5 387)" textLength="21.5" lengthAdjust="spacingAndGlyphs">TSA</text>
<text font-size="36" transform="matrix(1 0.409 0.27 1 691.5 404.5)" textLength="75" lengthAdjust="spacingAndGlyphs">Security</text></g>
</g>
<!-- HEADLIGHT -->
<path fill="#000" d="M924.5 479.5L927.5 459.5L938 449.5L1015 461.5L1058 456.5L1078 454.5L1099 491L1096 495L1040 501L1034 506L1025 506.5L988 501.5Z"/>
<path fill="#c9cdc9" d="M926.7 478.7L929.4 460.4L938.6 451.6L985.2 460.8L989.8 499.7Z"/>
<path fill="#dfe2df" d="M931 475L933 463L940 455.5L983 463.5L986 494Z" opacity="0.45"/>
<path fill="url(#amber)" d="M938.6 471.4L943.1 461.3L977 466.8L984.3 476.9L981.6 487.8L970 485.5L938.6 473Z"/>
<path d="M944 465.5L976 471.5" stroke="#8a4420" stroke-width="0.7" opacity="0.7"/>
<path fill="url(#cream)" d="M984.3 460.4L1014.5 465L1031.9 502.5L1026.4 504.3L989.8 499.7L985 480Z"/>
<path fill="#fff4dc" d="M984.5 461L993 462.5L995 499.5L989.8 499.2L985.2 480Z" opacity="0.8"/>
<path fill="#d89058" d="M1000 470L1004 470.5L1004 474L1000 473.5ZM996 488L1012 490L1013 495L997 494Z" opacity="0.5"/>
<path fill="#fcfcfc" d="M1017.3 464L1055.7 459.5L1063 494.3L1035.6 497Z"/>
<path fill="#9ca0a0" d="M1021.5 465.5L1033 469L1041.5 494.5L1035.6 497Z"/><path fill="#c8cccc" d="M1030 468L1037 470L1043 494L1041 494.5Z"/>
<path fill="#3a4040" d="M1035.6 497L1063 494.3L1064 498L1040 501Z"/>
<path fill="url(#orng)" d="M1056.6 458.6L1076.7 456.7L1096 489.7L1072.2 491.5L1064 475Z"/>
<path fill="#c86814" d="M1066 462L1075 460L1090 486L1084 487Z" opacity="0.7"/>
<path fill="#6a3008" d="M1068 485.5L1092 483.5L1096 489.7L1072.2 491.5Z"/>
<path fill="#b8bcc0" d="M1055 460L1058 460L1066 492L1063 494Z"/>
<path fill="#0000e8" d="M1039.2 473.2L1047 471.5L1055.7 475L1055.7 486L1048.4 487.8L1039.2 485.1Z"/><path fill="#0000b0" d="M1039.2 473.2L1047 471.5L1055.7 475L1047.5 476.5Z"/>
<path fill="#0000e8" d="M1062.1 466.8L1070 465L1078.6 468.6L1077.7 479.6L1070.3 481.4L1063 478.7Z"/><path fill="#0000b0" d="M1062.1 466.8L1070 465L1078.6 468.6L1070.5 470Z"/>
<!-- BUMPER -->
<path fill="url(#bumpU)" d="M924 482L990 503L1034 507.5L1100 497L1128 505L1130 527L1035.4 530.5L923 496.5Z"/>
<path d="M1063 431Q1088 438 1099 462" fill="none" stroke="#3c3c3c" stroke-width="3" filter="url(#b1)"/>
<path fill="url(#bump1)" d="M922 496L1035.4 530.8L1130 527.4L1130 535.8L1032 541L922 507Z"/>
<path d="M923 497L1035 531.5L1120 526" fill="none" stroke="#555" stroke-width="0.8" stroke-dasharray="1.5 1"/>
<path fill="url(#bump2)" d="M930 520L1030 548L1125 542L1120 572L1049 589L1005 585L940 562Z"/>
<path fill="#cfcfcf" d="M922 519.8L987.2 543.5L988 552.8L922.8 529Z"/>
<path fill="#9a9a9a" d="M1071 577L1086 567L1085 575L1073 581ZM1089 569L1103 563L1094 572Z"/>
<!-- GRILL -->
<path fill="#141414" d="M1092 452L1122 444L1128 478L1106 484Z"/>
<path fill="url(#reddots)" d="M1098.6 455.8L1115.5 452.7L1118 470.5L1103.7 475.5Z"/>
<path fill="#1c2c1c" d="M1098 451L1114 448.5L1115 452.5L1098.6 455.5Z"/>
<!-- PUSH BAR -->
<path fill="#0e0e0e" d="M1116 436.3L1119 431.6L1131.6 428.4L1142.5 430L1150.3 436.3L1161.3 458L1173.8 486.3L1180 500L1180 552.7L1176.9 570.6L1172.2 576.9L1147.2 588.6L1144.8 584L1131.6 580.8L1127 540L1125.3 486.3L1119 461.3Z"/>
<path d="M1133 436Q1141 436 1146 446L1162 482Q1171 503 1171 525L1170 560Q1169 572 1160 578" fill="none" stroke="#1e1e1e" stroke-width="5" filter="url(#b05)"/>
<circle cx="1130" cy="448" r="6" fill="#0a0a0a"/><path d="M1130 448L1136 446L1136 450Z" fill="#505050"/>
<path fill="#181818" d="M1153.4 437.8L1225.3 416L1230 425.3L1156.6 445.6Z"/><path d="M1155 440L1226 419" stroke="#2e2e2e" stroke-width="2"/>
<path fill="#d4d4c8" d="M1183 433L1197 430.8L1195.6 437.8L1184.7 440Z"/>
<path fill="#141414" d="M1209.7 408L1216 403.4L1230 403.4L1242.5 412.8L1256.6 436.3L1269 461.3L1270.6 481.6L1267.5 511.3L1264.4 526.9L1259.7 531.6L1237.8 541L1234.7 537.8L1250 528L1254 500L1250 470L1236 440L1225 420L1212 420Z"/>
<path d="M1222 410Q1232 410 1240 424L1256 455Q1262 470 1262 490L1258 522" fill="none" stroke="#1c1c1c" stroke-width="5" filter="url(#b05)"/>
<path fill="#20c4c4" d="M1160.5 448.8L1176.9 443.3L1176.5 448L1162.5 454Z"/><path fill="#1030d0" d="M1162.5 454L1176.5 448L1176 453.4L1165.2 459.7Z"/>
<path fill="#f08020" d="M1196.4 419.8L1203.4 417.5L1203.4 421.4L1197.2 423Z"/><path fill="#f0f4f8" d="M1203.4 416.7L1208 413.6L1208 419L1204.2 420.6Z"/>
<rect x="1202" y="434" width="6" height="4.6" fill="#0020e0"/><path fill="#b06020" d="M1202.7 439.4L1209.7 436.3L1212 447.2L1206.6 450.3Z"/>
<path d="M1212 432Q1214 450 1220 459" fill="none" stroke="#c8c8c8" stroke-width="1.6"/>
<!-- chrome/bright bits -->
<path fill="#080808" d="M1190 516L1204 510L1214 512L1214 521L1203 525L1190 523Z"/><path fill="#080808" d="M1246 486L1256 483L1266.5 483.5L1266.5 491L1256 496L1246 493Z"/>
<path fill="#050505" d="M1136 480L1155 480L1153.4 511L1142.5 516L1134.7 508Z"/><path fill="#c4c4d4" d="M1137.8 490.2L1145.6 490.2L1144 509.7L1137 508Z"/><path fill="#fff" d="M1140 491L1143 491L1142 507L1139.5 506.5Z"/>
<circle cx="1130" cy="574.5" r="4.7" fill="url(#sph)"/><circle cx="1219.8" cy="530.8" r="4.5" fill="url(#sph)"/><g fill="#f4f4f4"><circle cx="1134.7" cy="511.3" r="2.3"/><circle cx="1158.9" cy="519" r="2.2"/><circle cx="1193.3" cy="518.3" r="3"/><circle cx="1199.5" cy="520.3" r="2.2"/><circle cx="1252.7" cy="490.6" r="2.2"/><ellipse cx="1257.3" cy="441" rx="1.8" ry="3" transform="rotate(-30 1257.3 441)"/><ellipse cx="1167.5" cy="472.2" rx="2" ry="3.5" transform="rotate(-30 1167.5 472.2)"/><rect x="1139" y="531" width="7" height="2"/><circle cx="1151" cy="485" r="1.2"/><circle cx="1247" cy="487" r="1"/></g>
<path fill="#e01c14" d="M1203.4 516.7L1212.8 513.6L1212.8 519.8L1203.4 523.8Z"/><path d="M1204.5 518.5L1211.5 516" stroke="#ff8070" stroke-width="0.8"/><path fill="#e01c14" d="M1256.6 488.6L1265.2 484.7L1265.6 490.2L1256.6 494.8Z"/><path d="M1257.5 490.5L1264.5 487.2" stroke="#ff8070" stroke-width="0.8"/>
<path fill="#d8d8d8" d="M1151 574L1156.5 576.3L1151 579.5ZM1240 527.7L1245.6 530L1240 533Z"/><path d="M1167.5 577L1174 574.5M1258 531L1263 528" stroke="#ddd" stroke-width="1.5"/>
<!-- SUSPENSION coils -->
<path d="M894.7 477.8L876.5 523.3" stroke="#4c4c4c" stroke-width="4"/><path d="M895.5 478L877.5 523.5" stroke="#6a6a6a" stroke-width="1.4"/>
<g stroke="#060606" stroke-width="3.2" fill="none" stroke-linecap="round"><path d="M880 473.5L899 477"/><path d="M878 483L902 487.5"/><path d="M875 493L899 498"/><path d="M872 503L896 508"/><path d="M868 513L888 517.5"/></g>
<g stroke="#262626" stroke-width="1" fill="none"><path d="M880 472.8L899 476.3"/><path d="M878 482.3L902 486.8"/><path d="M875 492.3L899 497.3"/><path d="M872 502.3L896 507.3"/><path d="M868 512.3L888 516.8"/></g>
<path fill="#1a1a1a" d="M879 527L904 514L911 518.5L897.3 532L879.8 529.8Z"/><path d="M881 526.5L904 515" stroke="#333" stroke-width="1.5"/>
<!-- AXES -->
<g><path d="M256.5 596.5V614.3" stroke="#006400" stroke-width="1.5"/><path d="M247.7 612L256 613.8L270.4 613.1" stroke="#383838" stroke-width="1" fill="none" opacity="0.8"/><path d="M253 614H260" stroke="#101010" stroke-width="1.2"/>
<text x="253.3" y="597.8" font-family="Liberation Sans, sans-serif" font-size="10.5" font-weight="bold" fill="#008000">y</text>
<text x="241.8" y="615.9" font-family="Liberation Sans, sans-serif" font-size="10" font-weight="bold" fill="#0000ff">z</text>
<text x="271.5" y="617" font-family="Liberation Sans, sans-serif" font-size="10" font-weight="bold" fill="#ff0000">x</text></g>
</svg>
<!--CAR-END-->
</div>

<!-- MESSAGE PANE -->
<div id="msg" class="abs" style="left:235px;top:623px;width:1131px;height:79px">
<div class="abs" style="left:1px;top:0;width:1128px;height:1px;background:#fff"></div>
<div class="abs" style="left:0;top:4px;width:1131px;height:2px;border-top:1px solid #808080;border-bottom:1px solid #404040"></div>
<div class="abs redx" style="left:1px;top:6px"><svg class="abs" style="left:0;top:0" width="10" height="9"><path d="M1.5 1L8.5 8M8.5 1L1.5 8" stroke="#fff" stroke-width="2"/></svg></div>
<div class="abs" style="left:3px;top:20px;width:2px;height:55px;border-left:1px solid #fff;border-right:1px solid #808080"></div>
<div class="abs" style="left:7px;top:20px;width:2px;height:55px;border-left:1px solid #fff;border-right:1px solid #808080"></div>
<div class="abs" style="left:14px;top:6px;width:1115px;height:71px;background:#fff;border:1px solid;border-color:#404040 #d4d0c8 #d4d0c8 #404040;box-shadow:-1px -1px 0 #808080,1px 1px 0 #fff"></div>
<div class="abs" style="left:26px;top:15px;width:11px;height:1px;background:repeating-linear-gradient(90deg,#808080 0,#808080 1px,transparent 1px,transparent 2px)"></div>
<svg class="abs" style="left:36px;top:7px" width="16" height="16"><path d="M5.2 1H10.8L14.3 4.5V9.8L10.8 13.3H5.2L1.7 9.8V4.5Z" fill="#fff" stroke="#000080" stroke-width="1.1"/><rect x="7" y="3.4" width="2" height="1.8" fill="#00f"/><rect x="7" y="6.2" width="2" height="5" fill="#00f"/></svg>
<div class="abs" style="left:57px;top:8px;line-height:14px;white-space:nowrap;font-size:11px">ZModeler is ready.</div>
</div>

<!-- STATUS BAR -->
<div id="status" class="abs" style="left:0;top:702px;width:1366px;height:22px">
<div class="abs" style="left:0;top:0;width:1366px;height:1px;background:#808080"></div>
<div class="abs" style="left:0;top:1px;width:1366px;height:1px;background:#fff"></div>
<div class="abs" style="left:2px;top:4px;width:2px;height:16px;border-left:1px solid #808080;border-right:1px solid #fff"></div>
<div class="abs" style="left:1018px;top:5px;width:99px;height:15px;background:#7c1f0e;border:1px solid;border-color:#808080 #fff #fff #808080;color:#fff;font-weight:bold;font-size:11px;line-height:13px;text-align:center;white-space:nowrap;letter-spacing:-0.35px">SELECTED MODE</div>
<div class="abs" style="left:1122px;top:5px;width:34px;height:15px;border:1px solid;border-color:#fff #808080 #808080 #fff;font-weight:bold;font-size:11.5px;line-height:13px;text-align:center">Auto</div>
<div class="abs" style="left:1160px;top:5px;width:189px;height:15px;border:1px solid;border-color:#808080 #fff #fff #808080;font-size:11.5px;line-height:14px;padding-left:2px;white-space:nowrap;letter-spacing:-0.45px">Cursor: 0.24376, 0.80279, -0.12666</div>
<svg class="abs" style="left:1350px;top:7px" width="14" height="14"><g fill="#fff"><rect x="10" y="0" width="2" height="2"/><rect x="6" y="4" width="2" height="2"/><rect x="10" y="4" width="2" height="2"/><rect x="2" y="8" width="2" height="2"/><rect x="6" y="8" width="2" height="2"/><rect x="10" y="8" width="2" height="2"/></g><g fill="#808080"><rect x="11" y="1" width="2" height="2"/><rect x="7" y="5" width="2" height="2"/><rect x="11" y="5" width="2" height="2"/><rect x="3" y="9" width="2" height="2"/><rect x="7" y="9" width="2" height="2"/><rect x="11" y="9" width="2" height="2"/></g></svg>
</div>

<!-- TASKBAR -->
<div id="task" class="abs" style="left:0;top:724px;width:1366px;height:44px;border-top:1px solid #fff">
<!--TASK-START--><svg class="abs" style="left:0;top:0" width="1366" height="43" viewBox="0 725 1366 43">
<defs>
<g id="shield"><path d="M0 2.5Q3.5 2.3 6.5 0Q9.5 2.3 13 2.5Q13.5 10 6.5 15.5Q-0.5 10 0 2.5Z" fill="#e8e8ec" stroke="#9098a8" stroke-width="0.8"/>
<path d="M1.5 3.7Q4.2 3.4 6.5 1.8V7.8H1.3Q1.2 5.5 1.5 3.7Z" fill="#2a7fe0"/><path d="M6.5 1.8Q8.8 3.4 11.5 3.7Q11.8 5.5 11.7 7.8H6.5Z" fill="#ffd21c"/>
<path d="M1.3 7.8H6.5V13.8Q2.2 10.8 1.3 7.8Z" fill="#ffd21c"/><path d="M6.5 7.8H11.7Q10.8 10.8 6.5 13.8Z" fill="#2a7fe0"/></g>
<linearGradient id="psg" x1="0" y1="0" x2="0" y2="1"><stop offset="0" stop-color="#2e6fc6"/><stop offset="1" stop-color="#163f8a"/></linearGradient>
<linearGradient id="fold" x1="0" y1="0" x2="0" y2="1"><stop offset="0" stop-color="#fbe9a8"/><stop offset="1" stop-color="#f1cf6c"/></linearGradient>
<linearGradient id="foldb" x1="0" y1="0" x2="0" y2="1"><stop offset="0" stop-color="#bfe6fb"/><stop offset="1" stop-color="#5db4ea"/></linearGradient>
<radialGradient id="ieg" cx="0.4" cy="0.35" r="0.7"><stop offset="0" stop-color="#9fe0fb"/><stop offset="0.6" stop-color="#3aa7e6"/><stop offset="1" stop-color="#1c7ccc"/></radialGradient>
<linearGradient id="delta" x1="0" y1="0" x2="1" y2="1"><stop offset="0" stop-color="#6a6a92"/><stop offset="1" stop-color="#2a2a48"/></linearGradient>
<linearGradient id="silver" x1="0" y1="0" x2="1" y2="0"><stop offset="0" stop-color="#fff"/><stop offset="0.5" stop-color="#e8e8e8"/><stop offset="1" stop-color="#808088"/></linearGradient>
<radialGradient id="gold" cx="0.5" cy="0.4" r="0.6"><stop offset="0" stop-color="#ffd98a"/><stop offset="1" stop-color="#d98a10"/></radialGradient>
<linearGradient id="ivg" x1="0" y1="0" x2="1" y2="1"><stop offset="0" stop-color="#f4f4f4"/><stop offset="1" stop-color="#b8b8b8"/></linearGradient>
<linearGradient id="ivb" x1="0" y1="0" x2="1" y2="1"><stop offset="0" stop-color="#e4e4e4"/><stop offset="0.35" stop-color="#a8a8a8"/><stop offset="0.65" stop-color="#c8a030"/><stop offset="1" stop-color="#9a8020"/></linearGradient>
<radialGradient id="wmp" cx="0.45" cy="0.4" r="0.6"><stop offset="0" stop-color="#ffb060"/><stop offset="1" stop-color="#e85a08"/></radialGradient>
<linearGradient id="padg" x1="0" y1="0" x2="0" y2="1"><stop offset="0" stop-color="#c8c8c8"/><stop offset="1" stop-color="#606060"/></linearGradient>
<linearGradient id="wing" x1="0" y1="0" x2="0" y2="1"><stop offset="0" stop-color="#4f86c8"/><stop offset="1" stop-color="#5fae78"/></linearGradient>
<radialGradient id="lensc" cx="0.4" cy="0.4" r="0.6"><stop offset="0" stop-color="#2ea060"/><stop offset="0.5" stop-color="#0a3a20"/><stop offset="1" stop-color="#101018"/></radialGradient>
</defs>
<!-- start button -->
<rect x="2.5" y="726.5" width="51" height="37" fill="#d4d0c8"/><path d="M2.5 763.5V726.5H53.5" fill="none" stroke="#fff"/><path d="M2.5 763.5H53.5V726.5" fill="none" stroke="#404040"/><path d="M3.5 762.5H52.5V727.5" fill="none" stroke="#808080"/>
<path d="M6.5 738.5Q9 737 11.5 738.8L10.5 743.3Q8 741.7 5.5 743Z" fill="#f0582a"/><path d="M12.3 739.2Q15 740.7 18.5 738.8L17.3 743.5Q14.5 745 11.3 743.7Z" fill="#7cbb3a"/>
<path d="M5.3 744Q8 742.7 10.3 744.2L9.3 748.7Q7 747.3 4.3 748.5Z" fill="#3a8ae0"/><path d="M11.1 744.6Q14 746 17.1 744.5L16 749Q13 750.5 10.1 749.2Z" fill="#fbbc1c"/>
<text x="21" y="749.5" font-family="Liberation Sans, sans-serif" font-size="13.5" font-weight="bold" fill="#000" textLength="29.5" lengthAdjust="spacingAndGlyphs">Start</text>
<!-- explorer button -->
<rect x="63.5" y="726.5" width="47" height="37" fill="#d4d0c8"/><path d="M63.5 763.5V726.5H110.5" fill="none" stroke="#fff"/><path d="M63.5 763.5H110.5V726.5" fill="none" stroke="#404040"/><path d="M64.5 762.5H109.5V727.5" fill="none" stroke="#808080"/>
<path d="M72.5 735V733.5Q72.5 732.5 73.5 732.5H84.5L86.5 734.5H101Q102 734.5 102 735.5V737" fill="#f3d988" stroke="#d8b050" stroke-width="0.8"/>
<rect x="74" y="733" width="3" height="1.8" fill="#20b040"/><rect x="82" y="735" width="3" height="1.8" fill="#e03020"/><rect x="90" y="737" width="3" height="1.8" fill="#2090f0"/>
<path d="M78 735.5H84V737H78Z M86 737.2H90V738.5H86Z M94 738H100V739.5H94Z" fill="#fff"/>
<path d="M71.5 738.5Q71.5 737.5 72.5 737.5H87L89 739.5H101.5Q102.5 739.5 102.5 740.5V757Q102.5 758 101.5 758H72.5Q71.5 758 71.5 757Z" fill="url(#fold)" stroke="#d8b050" stroke-width="0.8"/>
<path d="M75.5 760.5V750.5Q75.5 748.5 77.5 748.5H96.5Q98.5 748.5 98.5 750.5V760.5H93V754.5H81V760.5Z" fill="url(#foldb)" stroke="#4aa0dc" stroke-width="0.8"/>
<path d="M78.5 746L79 750L83 748L79.5 751L78.5 755L78 751L74 751.5L77.5 750Z" fill="#fff" opacity="0.95"/>
<!-- IE -->
<path d="M146.6 750.25A10.5 10.5 0 1 1 148 745" fill="none" stroke="#2b9fe6" stroke-width="6"/>
<path d="M146.6 750.25A10.5 10.5 0 1 1 148 745" fill="none" stroke="#7fd4fb" stroke-width="2.4" opacity="0.75"/>
<rect x="128" y="743.8" width="23" height="4" fill="#2b9fe6"/><rect x="129" y="744.3" width="21" height="1.3" fill="#7fd4fb" opacity="0.7"/>
<path d="M125.5 758.5Q117.5 753 125 741Q134 729 147 729.3Q152.5 730 150 735.5" fill="none" stroke="#f6b91a" stroke-width="2.2"/><path d="M125 757.5Q119 752.5 126 741.5Q134.5 730.5 146.5 730.5" fill="none" stroke="#ffe27a" stroke-width="0.8"/>
<!-- PS -->
<rect x="173.5" y="731" width="28" height="26.5" fill="#a8a49c" opacity="0.5"/><rect x="172.7" y="729.7" width="28.5" height="26.3" fill="url(#psg)"/>
<text x="178.5" y="749" font-family="Liberation Sans, sans-serif" font-size="14.5" fill="#fff" textLength="16" lengthAdjust="spacingAndGlyphs">Ps</text>
<!-- camera -->
<path d="M226.2 731.5L251.8 732.8L250.5 758.3L224.8 756.8Z" fill="#f6f6f6" stroke="#c8c8c8" stroke-width="0.5"/><path d="M227.6 733L250.4 734.2L249.6 748L226.8 746.8Z" fill="#5aa0ec"/><path d="M227.6 733L250.4 734.2L250 739L227.3 738Z" fill="#3a84e0"/>
<path d="M236 739Q239 735.5 242.5 738Q245.5 736 248.5 739L249.6 748L234 747.3Z" fill="#a8d090"/><circle cx="237" cy="736.8" r="2.2" fill="#c45ad8"/><path d="M243 736L247 735.2L248 738.5L244 739Z" fill="#e8e8f0"/>
<path d="M232 741.5L238 738.5L248.5 740.5L250.5 746L250 757.5L238 758.2L230 756Z" fill="#1c1c22"/><path d="M238 738.5L243 737.2L248.5 740.5L241 742.5Z" fill="#4a4a52"/><path d="M241 744L249 746L249.3 756L242 757Z" fill="#2e2e36"/>
<circle cx="230.2" cy="749.8" r="8" fill="#0c0c12"/><circle cx="230.2" cy="749.8" r="6.2" fill="#1a2a24"/><circle cx="230.2" cy="749.8" r="5" fill="url(#lensc)"/><circle cx="229" cy="748.3" r="1.3" fill="#7ae0a0"/><circle cx="232" cy="751.5" r="0.9" fill="#e0b060"/>
<!-- PJ64 -->
<text x="275.5" y="745.5" font-family="Liberation Sans, sans-serif" font-size="19" font-weight="bold" fill="#f01018" stroke="#00e8f0" stroke-width="1.3" textLength="23.5" lengthAdjust="spacingAndGlyphs" paint-order="stroke">PJ</text>
<text x="277.5" y="757.5" font-family="Liberation Sans, sans-serif" font-size="11.5" font-weight="bold" fill="#f01018" letter-spacing="1">64</text>
<use href="#shield" x="289" y="745"/>
<!-- G1 -->
<rect x="321" y="729" width="32" height="25" rx="2" fill="#282828"/><rect x="327" y="730.5" width="19" height="18" rx="2.5" fill="#484848"/><rect x="321" y="747" width="18" height="7" rx="1" fill="#303030"/>
<text x="330" y="740.5" font-family="Liberation Sans, sans-serif" font-size="7" font-weight="bold" fill="#e0e0e0">G1</text>
<rect x="332" y="746" width="21" height="15" fill="#083020"/><path d="M332 746H345V750L332 754Z" fill="#1c5a40"/>
<use href="#shield" x="339" y="745.5"/>
<!-- STBC -->
<rect x="371" y="729" width="32" height="32" fill="#000"/>
<text x="381.5" y="737.5" font-family="Liberation Serif, serif" font-size="9" font-weight="bold" fill="#f0c010">ST</text><text x="382" y="760" font-family="Liberation Serif, serif" font-size="9" font-weight="bold" fill="#f0c010">BC</text>
<path d="M371 737.5H385V738.7H371Z M371 751.5H385V752.7H371Z" fill="#8090c0"/><path d="M377 743L388 741L384 746L388 750L377 748Z" fill="#b8b8b8"/><ellipse cx="394.5" cy="742.5" rx="7.5" ry="5.8" fill="#a8a8a8"/><ellipse cx="393" cy="741" rx="4" ry="2.5" fill="#d8d8d8"/><circle cx="389" cy="740.5" r="0.9" fill="#e02020"/>
<use href="#shield" x="389.5" y="746"/>
<!-- starfleet black -->
<rect x="421" y="729" width="32" height="32" fill="#000"/><circle cx="437" cy="744.5" r="11.5" fill="none" stroke="#505068" stroke-width="0.8"/>
<path d="M438 729.5Q443 740 446 754Q437 747 427 759Q430 742 438 729.5Z" fill="url(#delta)"/>
<use href="#shield" x="439.5" y="746"/>
<!-- comm badge -->
<ellipse cx="487" cy="748" rx="13.5" ry="8.5" fill="url(#gold)" stroke="#c87808" stroke-width="0.8"/>
<path d="M487.5 730.5Q492 741 494.5 752Q485 748 477 759.5Q480 743 487.5 730.5Z" fill="url(#silver)" stroke="#505058" stroke-width="0.7"/>
<use href="#shield" x="489.5" y="746"/>
<!-- space -->
<rect x="521" y="729" width="32" height="32" fill="#080404"/><g fill="#5a3018"><circle cx="526" cy="733" r="0.5"/><circle cx="531" cy="737" r="0.5"/><circle cx="545" cy="734" r="0.5"/><circle cx="549" cy="740" r="0.5"/><circle cx="528" cy="747" r="0.5"/><circle cx="541" cy="731" r="0.5"/><circle cx="547" cy="745" r="0.5"/><circle cx="524" cy="741" r="0.5"/></g>
<path d="M535.5 732V742L532 748L526 757M535.5 742L539 748L536 754L528 759M532 748H539" fill="none" stroke="#8a2a14" stroke-width="2"/><path d="M534 740L537 740L538.5 744L532.5 744Z" fill="#a83018"/>
<path d="M535.5 730V738" stroke="#e86820" stroke-width="1.4"/><circle cx="535.5" cy="736" r="1.6" fill="#ffd890"/>
<g fill="#d85018"><circle cx="527" cy="757" r="0.8"/><circle cx="530" cy="758.5" r="0.8"/><circle cx="534" cy="756" r="0.8"/><circle cx="538" cy="757" r="0.8"/><circle cx="524" cy="758.5" r="0.8"/></g>
<use href="#shield" x="539.5" y="745.5"/>
<!-- monkey -->
<path d="M575 751Q572.5 742 575.5 740.5Q577.5 741 576.5 745Q577 751 582 753" fill="none" stroke="#6a3a20" stroke-width="1.6"/>
<path d="M582 743Q584 737 590 738.5Q597 740 596 750L594 758H590L589.5 752L585 753L584 758.5H580Q579 750 582 743Z" fill="#6a3c22"/>
<ellipse cx="590.5" cy="737.5" rx="6.5" ry="6" fill="#5a3018"/><ellipse cx="593.5" cy="739.5" rx="4.5" ry="4" fill="#a87858"/><circle cx="584.5" cy="735" r="2.2" fill="#8a5a3a"/><path d="M590 735.5H596V737.5H590Z" fill="#506070"/>
<circle cx="592" cy="745" r="2.5" fill="#d8d8d8"/><path d="M581 758.5H586V760H581Z" fill="#a87858"/>
<use href="#shield" x="589.5" y="746"/>
<!-- IV -->
<rect x="622.5" y="730" width="29" height="29" rx="2" fill="url(#ivb)"/><rect x="625" y="732.5" width="24" height="24" fill="url(#ivg)"/>
<path d="M629 738H634V752H630V740H629Z M634.5 738H638.5L641 748L643 738H646L642.5 752H638Z" fill="#181818"/>
<!-- gamepad -->
<path d="M671 753H703V754H671Z" fill="#000"/>
<path d="M676 738Q680 735 684 737.5H691Q695 735 699 738Q703 745 702.5 750Q701 753.5 698 752L693 746.5H682L677 752Q674 753.5 672.5 750Q672 745 676 738Z" fill="url(#padg)" stroke="#505050" stroke-width="0.6"/>
<circle cx="680" cy="741.5" r="2.6" fill="#404040"/><circle cx="695" cy="741.5" r="2.6" fill="#505058"/><circle cx="684" cy="746" r="2" fill="#383838"/><circle cx="691" cy="746" r="2" fill="#383838"/><circle cx="687.5" cy="741" r="1" fill="#e0e0e0"/>
<!-- window shield -->
<rect x="721.5" y="732.5" width="29" height="23" fill="#f4f6fa" stroke="#8898b0" stroke-width="1"/><rect x="722" y="733" width="28" height="2.5" fill="#c8d4e8"/><rect x="724" y="737" width="11" height="15" fill="url(#wing)"/>
<path d="M737 739H745M737 741.5H745M737 744H745M737 746.5H742" stroke="#b0b8c8" stroke-width="0.8"/><rect x="746.3" y="737" width="1.5" height="9" fill="#2a9050"/><path d="M742 733.8H743M744.5 733.8H745.5M747 733.8H748" stroke="#405070" stroke-width="1"/>
<use href="#shield" x="739" y="745"/>
<!-- WMP button -->
<rect x="763.5" y="726.5" width="47" height="37" fill="#d4d0c8"/><path d="M763.5 763.5V726.5H810.5" fill="none" stroke="#fff"/><path d="M763.5 763.5H810.5V726.5" fill="none" stroke="#404040"/><path d="M764.5 762.5H809.5V727.5" fill="none" stroke="#808080"/>
<path d="M779 735.5H798.5L800 757L779 758Z" fill="#8cc4ec"/><path d="M776 735H796.5L797.5 757L776 757.5Z" fill="#a8d4f4"/><path d="M773 734.5L794 734L795 757L773 756.5Z" fill="#7cbcec" stroke="#5aa0d8" stroke-width="0.5"/>
<circle cx="783.5" cy="745.5" r="8.8" fill="url(#wmp)"/><path d="M780.5 740.5L789.5 745.5L780.5 750.8Z" fill="#fff"/>
<!-- Z button pressed -->
<rect x="813" y="726" width="48" height="38" fill="#fff"/><path d="M813.5 763.5V726.5H860.5" fill="none" stroke="#404040"/><path d="M814.5 762.5V727.5H859.5" fill="none" stroke="#808080"/><path d="M813.5 763.5H860.5V726.5" fill="none" stroke="#fff"/>
<rect x="821" y="729" width="32" height="32" fill="#f7940c"/>
<path d="M829 738H847L836 752H848.5V757H827.5L838.5 743H829Z" fill="#7a4a08" opacity="0.85"/><path d="M831 740H849L838 754H850.5V757.5H829.5Z" fill="#d07808" opacity="0.7"/>
<path d="M826.5 734H844.5V738L833 750H846V754.5H825V750.5L836.5 738.5H826.5Z" fill="#3a1478" stroke="#c8b8e0" stroke-width="0.5"/>
<!-- black bar -->
<rect x="1141.5" y="726" width="9.5" height="40" fill="#000"/>
<!-- tray -->
<path d="M1181.5 765.5V726.5H1366" fill="none" stroke="#808080"/><path d="M1181.5 765.5H1366" fill="none" stroke="#fff"/>
<path d="M1187.5 742L1190 739.5L1192.5 742M1187.5 746L1190 743.5L1192.5 746" fill="none" stroke="#000" stroke-width="1.6"/>
<!-- power -->
<path d="M1204.5 741.5Q1204.5 739.5 1206.5 739.5H1210M1204.5 741.5V751Q1204.5 753 1206.5 753H1211.5Q1213.5 753 1213.5 751" fill="none" stroke="#606060" stroke-width="1.2"/>
<path d="M1206.5 741.5H1212V751H1206.5Z" fill="#f8f8f8" stroke="#707070" stroke-width="0.8"/>
<path d="M1211 741V738.5M1215 741V738.5" stroke="#505050" stroke-width="1.3"/><path d="M1209.5 741H1216.5V744.5Q1216.5 747.5 1213 747.5Q1209.5 747.5 1209.5 744.5Z" fill="#fff" stroke="#505050" stroke-width="1"/><path d="M1213 747.5V750.5" stroke="#505050" stroke-width="1.3"/>
<!-- signal -->
<g fill="#f4f4f4" stroke="#808080" stroke-width="0.7"><rect x="1228.5" y="749.5" width="2" height="2.5"/><rect x="1231.5" y="747.5" width="2" height="4.5"/><rect x="1234.5" y="745.5" width="2" height="6.5"/><rect x="1237.5" y="743" width="2" height="9"/><rect x="1240.5" y="740.5" width="2.5" height="11.5"/></g>
<!-- speaker -->
<path d="M1252.5 743.5H1255L1259 739.5V752.5L1255 748.5H1252.5Z" fill="#f4f4f4" stroke="#707070" stroke-width="0.9"/><path d="M1261 743Q1263 746 1261 749M1263.5 741Q1266.5 746 1263.5 751" fill="none" stroke="#808080" stroke-width="1"/>
<text x="1309.5" y="742" font-family="Liberation Sans, sans-serif" font-size="11" fill="#000" text-anchor="middle">7:04 AM</text>
<text x="1310" y="759" font-family="Liberation Sans, sans-serif" font-size="11" fill="#000" text-anchor="middle">9/20/2013</text>
<!-- show desktop -->
<rect x="1347" y="741" width="15" height="11" fill="#2a6ad0"/><path d="M1347 741H1362V745L1347 749Z" fill="#4a90e8"/><rect x="1349" y="749.5" width="13" height="2.5" fill="#101828"/><rect x="1347.5" y="749.5" width="2" height="2" fill="#e0c020"/>
</svg>
<!--TASK-END-->
</div>
</body>
</html>
